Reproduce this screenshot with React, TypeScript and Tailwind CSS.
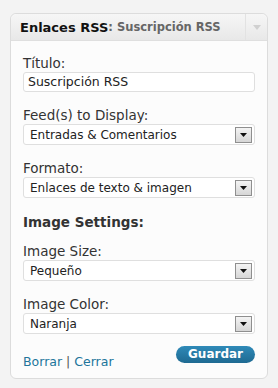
const font = { fontFamily: '"DejaVu Sans", Verdana, sans-serif' };

function Label({ children }: { children: React.ReactNode }) {
  return <div className="mb-[1px] h-[16px] whitespace-nowrap text-[13.5px] leading-[16px] text-[#333]">{children}</div>;
}

function Select({ value }: { value: string }) {
  return (
    <div className="flex h-[21px] items-center justify-between rounded-[3px] border border-[#dfdfdf] bg-white pl-[6px] pr-[2px]">
      <span className="text-[12px] text-[#222]">{value}</span>
      <span className="flex h-[16px] w-[17px] items-center justify-center border border-[#8f8f8f] bg-gradient-to-b from-[#f4f4f4] to-[#d6d6d6]">
        <svg width="7" height="4" viewBox="0 0 7 4">
          <path d="M0 0h7L3.5 4z" fill="#111" />
        </svg>
      </span>
    </div>
  );
}

function Field({ label, value }: { label: string; value: string }) {
  return (
    <div className="mt-[15px]">
      <Label>{label}</Label>
      <Select value={value} />
    </div>
  );
}

export default function App() {
  return (
    <div className="h-[388px] w-[278px] bg-[#f3f3f3] pl-[10px] pt-[13px]" style={font}>
      <div className="w-[258px] rounded-[6px] border border-[#dcdcdc] bg-[#fcfcfc]">
        <div className="flex h-[27px] items-stretch rounded-t-[6px] border-b border-[#dfdfdf] bg-gradient-to-b from-[#f6f6f6] to-[#e8e8e8]">
          <div className="flex flex-1 items-center whitespace-nowrap pl-[9px] pt-[1px]">
            <span className="text-[13px] font-bold text-[#111]">Enlaces RSS</span>
            <span className="text-[11.5px] font-bold text-[#666]">: Suscripción RSS</span>
          </div>
          <div className="flex w-[22px] items-center justify-center border-l border-[#e2e2e2]">
            <svg width="8" height="5" viewBox="0 0 8 5">
              <path d="M0 0h8L4 5z" fill="#d0d0d0" />
            </svg>
          </div>
        </div>
        <div className="px-[12px] pb-[8px] pt-[14px]">
          <Label>Título:</Label>
          <div className="flex h-[20px] items-center rounded-[3px] border border-[#dfdfdf] bg-white pl-[4px] text-[12.5px] text-[#222]">
            Suscripción RSS
          </div>
          <Field label="Feed(s) to Display:" value="Entradas & Comentarios" />
          <Field label="Formato:" value="Enlaces de texto & imagen" />
          <div className="mt-[15px] text-[13.5px] font-bold leading-[18px] text-[#333]">Image Settings:</div>
          <div className="mt-[12px]">
            <Label>Image Size:</Label>
            <Select value="Pequeño" />
          </div>
          <Field label="Image Color:" value="Naranja" />
          <div className="mt-[12px] flex h-[24px] items-start justify-between">
            <div className="mt-[8px] text-[12.5px] leading-[16px] text-[#21759b]">
              Borrar <span className="text-[#555]">|</span> Cerrar
            </div>
            <button className="h-[17px] rounded-full bg-gradient-to-b from-[#2f8ab8] to-[#1e6a92] px-[12px] text-[12px] font-bold leading-[17px] text-white">
              Guardar
            </button>
          </div>
        </div>
      </div>
    </div>
  );
}
